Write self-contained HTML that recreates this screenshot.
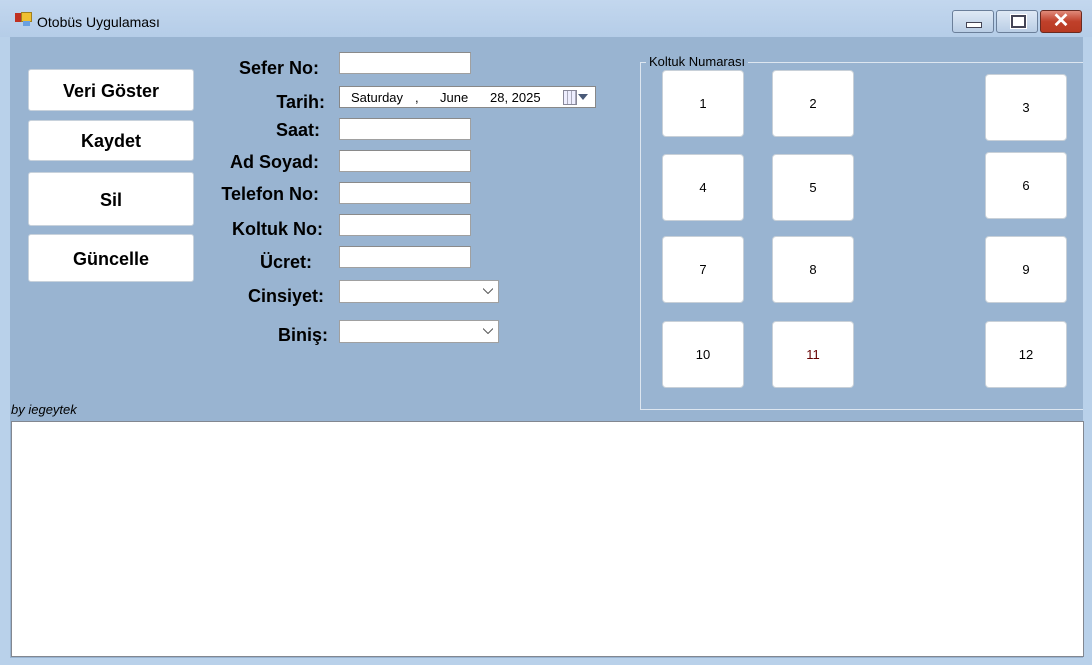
<!DOCTYPE html>
<html><head><style>
body{margin:0;width:1092px;height:665px;overflow:hidden;background:#b9d1ea;font-family:"Liberation Sans",sans-serif;position:relative}
.a{position:absolute}
.title{left:0;top:0;width:1092px;height:37px;background:linear-gradient(#c3d7ee,#b5cde8)}
.client{left:10px;top:37px;width:1073px;height:621px;background:#99b4d1}
.btn{position:absolute;background:#fff;border:1px solid #c8d2dc;border-radius:3px;font-weight:bold;font-size:18px;display:flex;align-items:center;justify-content:center;box-sizing:border-box;padding-top:2px}
.lbl{position:absolute;font-weight:bold;font-size:18px;text-align:right;width:200px}
.tb{position:absolute;background:#fff;border:1px solid #a0a0a0;border-top-color:#8a8a8a;box-sizing:border-box;height:22px;width:132px;left:339px}
.seat{position:absolute;background:#fff;border:1px solid #c8d0d8;border-radius:4px;width:82px;height:67px;box-sizing:border-box;display:flex;align-items:center;justify-content:center;font-size:13px}
.cb{position:absolute;left:339px;width:160px;height:23px;background:#fff;border:1px solid #a0a0a0;box-sizing:border-box}
.cb svg{position:absolute;right:5px;top:7px}
.wb{position:absolute;top:10px;height:23px;border:1px solid #6b7f9a;border-radius:3px;box-sizing:border-box;background:linear-gradient(#dfe9f5,#b9cde5)}
</style></head><body>
<div class="a title"></div>
<div class="a" style="left:15px;top:13px;width:9px;height:9px;background:#c03020"></div>
<div class="a" style="left:21px;top:12px;width:9px;height:8px;background:#f0c030;border:1px solid #a08020"></div>
<div class="a" style="left:23px;top:21px;width:7px;height:5px;background:#6aa0e0"></div>
<div class="a" style="left:37px;top:14px;font-size:14px">Otobüs Uygulaması</div>
<div class="wb" style="left:952px;width:42px"><div class="a" style="left:13px;top:11px;width:14px;height:4px;background:#fff;border:1px solid #445"></div></div>
<div class="wb" style="left:996px;width:42px"><div class="a" style="left:14px;top:4px;width:11px;height:9px;border:2px solid #445;background:#fff;outline:1px solid #fff"></div></div>
<div class="wb" style="left:1040px;width:42px;background:linear-gradient(#e08a7a,#c0402a 50%,#b83a22);border-color:#6a2a20;color:#fff;font-weight:bold;font-size:20px;text-align:center;line-height:21px">✕</div>
<div class="a client"></div>

<div class="btn" style="left:28px;top:69px;width:166px;height:42px">Veri Göster</div>
<div class="btn" style="left:28px;top:120px;width:166px;height:41px">Kaydet</div>
<div class="btn" style="left:28px;top:172px;width:166px;height:54px">Sil</div>
<div class="btn" style="left:28px;top:234px;width:166px;height:48px">Güncelle</div>

<div class="lbl" style="left:119px;top:58px">Sefer No:</div>
<div class="lbl" style="left:125px;top:92px">Tarih:</div>
<div class="lbl" style="left:120px;top:120px">Saat:</div>
<div class="lbl" style="left:119px;top:152px">Ad Soyad:</div>
<div class="lbl" style="left:119px;top:184px">Telefon No:</div>
<div class="lbl" style="left:123px;top:219px">Koltuk No:</div>
<div class="lbl" style="left:112px;top:252px">Ücret:</div>
<div class="lbl" style="left:124px;top:286px">Cinsiyet:</div>
<div class="lbl" style="left:128px;top:325px">Biniş:</div>

<div class="tb" style="top:52px"></div>
<div class="a" style="left:339px;top:86px;width:257px;height:22px;background:#fff;border:1px solid #888;box-sizing:border-box;font-size:13px">
<span class="a" style="left:11px;top:3px">Saturday</span><span class="a" style="left:75px;top:3px">,</span><span class="a" style="left:100px;top:3px">June</span><span class="a" style="left:150px;top:3px">28, 2025</span>
<div class="a" style="left:223px;top:3px;width:12px;height:13px;border:1px solid #889;background:repeating-linear-gradient(90deg,#eef 0 3px,#aab 3px 4px)"></div>
<svg class="a" style="left:238px;top:7px" width="10" height="6"><path d="M0 0h10L5 6z" fill="#4a5a78"/></svg>
</div>
<div class="tb" style="top:118px"></div>
<div class="tb" style="top:150px"></div>
<div class="tb" style="top:182px"></div>
<div class="tb" style="top:214px"></div>
<div class="tb" style="top:246px"></div>
<div class="cb" style="top:280px"><svg width="10" height="6"><path d="M0 0.5L5 5.5L10 0.5" stroke="#555" fill="none"/></svg></div>
<div class="cb" style="top:320px"><svg width="10" height="6"><path d="M0 0.5L5 5.5L10 0.5" stroke="#555" fill="none"/></svg></div>

<div class="a" style="left:640px;top:62px;width:443px;height:348px;border:1px solid #dde6f0;border-right:none;box-sizing:border-box"></div>
<div class="a" style="left:646px;top:54px;padding:0 3px;background:#99b4d1;font-size:13px">Koltuk Numarası</div>
<div class="seat" style="left:662px;top:70px">1</div>
<div class="seat" style="left:772px;top:70px">2</div>
<div class="seat" style="left:985px;top:74px">3</div>
<div class="seat" style="left:662px;top:154px">4</div>
<div class="seat" style="left:772px;top:154px">5</div>
<div class="seat" style="left:985px;top:152px">6</div>
<div class="seat" style="left:662px;top:236px">7</div>
<div class="seat" style="left:772px;top:236px">8</div>
<div class="seat" style="left:985px;top:236px">9</div>
<div class="seat" style="left:662px;top:321px">10</div>
<div class="seat" style="left:772px;top:321px;color:#600">11</div>
<div class="seat" style="left:985px;top:321px">12</div>

<div class="a" style="left:11px;top:402px;font-size:13px;font-style:italic">by iegeytek</div>
<div class="a" style="left:11px;top:421px;width:1073px;height:236px;background:#fff;border:1px solid #828790;box-sizing:border-box"></div>
</body></html>
